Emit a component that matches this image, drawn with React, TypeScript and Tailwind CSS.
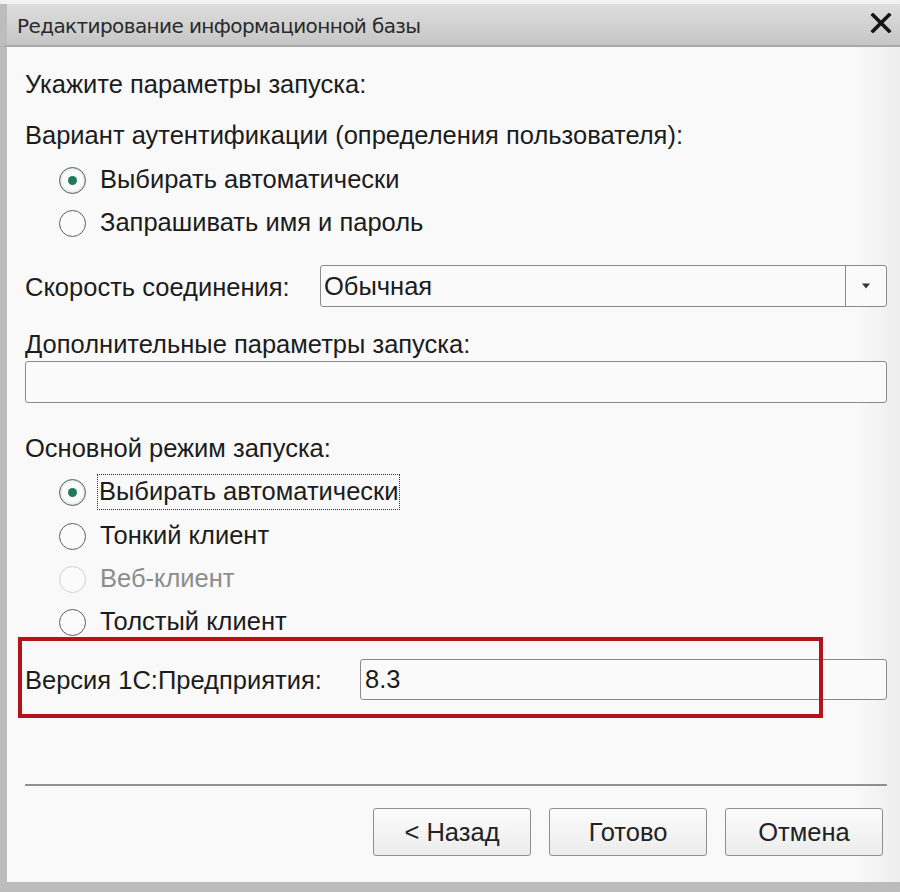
import React from "react";

const font = { fontFamily: '"Liberation Sans", Arial, sans-serif' };

function Radio({ checked, disabled }: { checked?: boolean; disabled?: boolean }) {
  return (
    <span
      className={`flex h-[27px] w-[27px] shrink-0 items-center justify-center rounded-full border-[1.5px] bg-[#fbfbfb] ${
        disabled ? "border-[#cfcfcf]" : "border-[#5c5c5c]"
      } ${checked ? "shadow-[inset_0_0_3px_#9cc9b6]" : ""}`}
    >
      {checked && <span className="h-[9px] w-[9px] rounded-full bg-[#1f7a5a]" />}
    </span>
  );
}

function RadioRow({
  label,
  checked,
  disabled,
  focused,
  className = "",
}: {
  label: string;
  checked?: boolean;
  disabled?: boolean;
  focused?: boolean;
  className?: string;
}) {
  return (
    <div className={`ml-[34px] flex h-[30px] items-center ${focused ? "gap-[11px]" : "gap-[14px]"} ${className}`}>
      <Radio checked={checked} disabled={disabled} />
      <span
        className={`leading-none ${disabled ? "text-[#8c8c8c]" : "text-[#1c1c1c]"} ${
          focused ? "border-[1.5px] border-dotted border-[#333] px-[1px] py-[4px]" : ""
        }`}
      >
        {label}
      </span>
    </div>
  );
}

function Button({ children }: { children: React.ReactNode }) {
  return (
    <div className="flex h-[48px] w-[158px] items-center justify-center rounded-[3px] border-[1.5px] border-[#8e8e8e] bg-gradient-to-b from-[#fcfcfc] to-[#ececec] text-[25.5px] text-[#222]">
      {children}
    </div>
  );
}

export default function App() {
  return (
    <div className="h-[892px] w-[900px] overflow-hidden bg-[#f2f2f2] pt-[4px]" style={font}>
      <div className="flex h-[888px] flex-col">
        {/* title bar */}
        <div className="flex h-[43px] shrink-0 items-center justify-between border-b-[2px] border-b-[#a9a9a9] border-l-[7px] border-l-[#bdbdbd] bg-gradient-to-b from-[#dedede] to-[#c6c6c6] pl-[10px] pr-[8px]">
          <span className="pt-[3px] text-[20px] text-[#2a2a2a]" style={{ fontFamily: '"DejaVu Sans", "Liberation Sans", sans-serif', letterSpacing: "-0.6px" }}>
            Редактирование информационной базы
          </span>
          <svg width="22" height="20" viewBox="0 0 22 20" className="mt-[-4px]">
            <path d="M3 2 L19 18 M19 2 L3 18" stroke="#141414" strokeWidth="3.6" strokeLinecap="square" />
          </svg>
        </div>

        {/* content */}
        <div className="flex flex-1 flex-col border-b-[10px] border-l-[7px] border-b-[#bcbcbc] border-l-[#bdbdbd] bg-gradient-to-r from-[#f9f9f9] from-[95%] to-[#eeeeee] pl-[18px] pr-[13px] text-[25.5px] text-[#1c1c1c]">
          <div className="mt-[22px] flex h-[30px] items-center">Укажите параметры запуска:</div>
          <div className="mt-[21px] flex h-[30px] items-center">Вариант аутентификации (определения пользователя):</div>
          <RadioRow className="mt-[15px]" label="Выбирать автоматически" checked />
          <RadioRow className="mt-[13px]" label="Запрашивать имя и пароль" />

          <div className="mt-[27px] flex h-[42px] items-center">
            <span className="w-[295px] shrink-0 pt-[3px]">Скорость соединения:</span>
            <div className="flex h-full flex-1 items-stretch rounded-[3px] border-[1.5px] border-[#8a8a8a] bg-[#fafafa]">
              <span className="flex flex-1 items-center pl-[3px]">Обычная</span>
              <span className="flex w-[41px] items-center justify-center border-l-[1.5px] border-[#8a8a8a]">
                <svg width="10" height="6" viewBox="0 0 10 6">
                  <path d="M1 0.5 L9 0.5 L5 5.5 Z" fill="#333" />
                </svg>
              </span>
            </div>
          </div>

          <div className="mt-[22px] flex h-[30px] items-center">Дополнительные параметры запуска:</div>
          <div className="mt-[2px] h-[42px] rounded-[3px] border-[1.5px] border-[#8a8a8a] bg-[#fafafa]" />

          <div className="mt-[30px] flex h-[30px] items-center">Основной режим запуска:</div>
          <RadioRow className="mt-[14px]" label="Выбирать автоматически" checked focused />
          <RadioRow className="mt-[14px]" label="Тонкий клиент" />
          <RadioRow className="mt-[13px]" label="Веб-клиент" disabled />
          <RadioRow className="mt-[13px]" label="Толстый клиент" />

          <div className="relative mt-[22px] flex h-[41px] items-center">
            <span className="w-[335px] shrink-0 pt-[2px]">Версия 1С:Предприятия:</span>
            <div className="flex h-full flex-1 items-center rounded-[3px] border-[1.5px] border-[#8a8a8a] bg-[#fafafa] pl-[4px]">
              8.3
            </div>
            {/* highlight annotation */}
            <div className="pointer-events-none absolute left-[-7px] top-[-22px] h-[81px] w-[805px] border-[4px] border-[#b3141c]" />
          </div>

          <div className="mt-[84px] h-[2px] bg-[#8f8f8f]" />

          <div className="mt-[22px] flex justify-end gap-[18px] pr-[4px]">
            <Button>&lt; Назад</Button>
            <Button>Готово</Button>
            <Button>Отмена</Button>
          </div>
        </div>
      </div>
    </div>
  );
}
